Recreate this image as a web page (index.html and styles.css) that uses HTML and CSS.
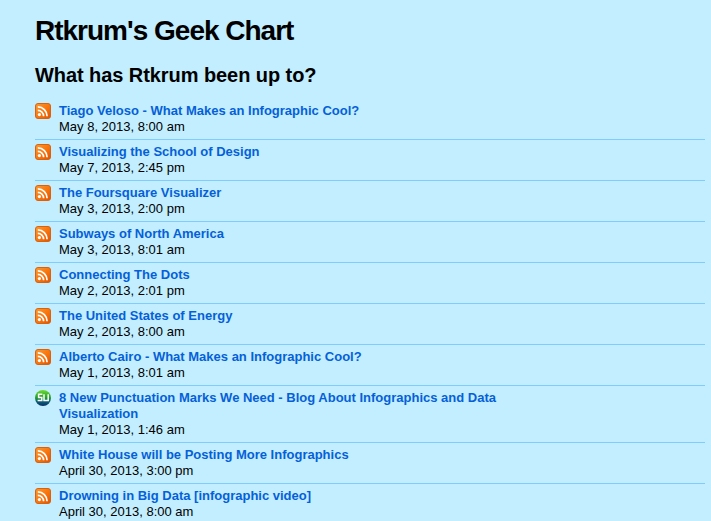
FILE: index.html
```html
<!DOCTYPE html>
<html lang="en">
<head>
<meta charset="utf-8">
<title>Rtkrum's Geek Chart</title>
<link rel="stylesheet" href="styles.css">
</head>
<body>
<svg class="defs" width="0" height="0" aria-hidden="true">
  <defs>
    <linearGradient id="rss-bg" x1="0" y1="0" x2="1" y2="1">
      <stop offset="0" stop-color="#fd9a2e"/>
      <stop offset="0.55" stop-color="#f8740c"/>
      <stop offset="1" stop-color="#e05200"/>
    </linearGradient>
    <linearGradient id="su-globe" x1="0" y1="0" x2="0" y2="1">
      <stop offset="0" stop-color="#6fdc30"/>
      <stop offset="0.5" stop-color="#1f9a2c"/>
      <stop offset="0.72" stop-color="#0c5f78"/>
      <stop offset="1" stop-color="#0a2f66"/>
    </linearGradient>
    <symbol id="rss" viewBox="0 0 16 16">
      <rect x="0.5" y="0.5" width="15" height="15" rx="2.5" fill="url(#rss-bg)" stroke="#d9620c"/>
      <circle cx="4.4" cy="11.6" r="1.6" fill="#fff"/>
      <path d="M2.8 7.4a5.8 5.8 0 0 1 5.8 5.8" fill="none" stroke="#fff" stroke-width="1.7"/>
      <path d="M2.8 3.9a9.3 9.3 0 0 1 9.3 9.3" fill="none" stroke="#fff" stroke-width="1.7"/>
    </symbol>
    <symbol id="su" viewBox="0 0 16 16">
      <circle cx="8" cy="8" r="8" fill="url(#su-globe)"/>
      <path d="M7.4 4.2H3.6v3.4h3.2v2.8H2.6" fill="none" stroke="#fff" stroke-width="1.5"/>
      <path d="M9 4.2v6.2h4.2V4.2" fill="none" stroke="#fff" stroke-width="1.5"/>
    </symbol>
  </defs>
</svg>
<main class="page">
  <h1 class="title">Rtkrum's Geek Chart</h1>
  <h2 class="subtitle">What has Rtkrum been up to?</h2>
  <ul class="feed">
    <li class="item"><svg class="icon"><use href="#rss"/></svg><div class="body"><a class="link" href="#">Tiago Veloso - What Makes an Infographic Cool?</a><div class="date">May 8, 2013, 8:00 am</div></div></li>
    <li class="item"><svg class="icon"><use href="#rss"/></svg><div class="body"><a class="link" href="#">Visualizing the School of Design</a><div class="date">May 7, 2013, 2:45 pm</div></div></li>
    <li class="item"><svg class="icon"><use href="#rss"/></svg><div class="body"><a class="link" href="#">The Foursquare Visualizer</a><div class="date">May 3, 2013, 2:00 pm</div></div></li>
    <li class="item"><svg class="icon"><use href="#rss"/></svg><div class="body"><a class="link" href="#">Subways of North America</a><div class="date">May 3, 2013, 8:01 am</div></div></li>
    <li class="item"><svg class="icon"><use href="#rss"/></svg><div class="body"><a class="link" href="#">Connecting The Dots</a><div class="date">May 2, 2013, 2:01 pm</div></div></li>
    <li class="item"><svg class="icon"><use href="#rss"/></svg><div class="body"><a class="link" href="#">The United States of Energy</a><div class="date">May 2, 2013, 8:00 am</div></div></li>
    <li class="item"><svg class="icon"><use href="#rss"/></svg><div class="body"><a class="link" href="#">Alberto Cairo - What Makes an Infographic Cool?</a><div class="date">May 1, 2013, 8:01 am</div></div></li>
    <li class="item"><svg class="icon"><use href="#su"/></svg><div class="body"><a class="link" href="#">8 New Punctuation Marks We Need - Blog About Infographics and Data Visualization</a><div class="date">May 1, 2013, 1:46 am</div></div></li>
    <li class="item"><svg class="icon"><use href="#rss"/></svg><div class="body"><a class="link" href="#">White House will be Posting More Infographics</a><div class="date">April 30, 2013, 3:00 pm</div></div></li>
    <li class="item"><svg class="icon"><use href="#rss"/></svg><div class="body"><a class="link" href="#">Drowning in Big Data [infographic video]</a><div class="date">April 30, 2013, 8:00 am</div></div></li>
  </ul>
</main>
</body>
</html>
```
FILE: styles.css
```css
html, body {
  margin: 0;
  padding: 0;
  height: 521px;
  overflow: hidden;
  background: #c2eeff;
}
body {
  font-family: "Liberation Sans", Arial, sans-serif;
  color: #000;
}
.defs {
  position: absolute;
}
.page {
  padding: 15px 6px 0 35px;
}
.title {
  margin: 0;
  font-size: 28px;
  line-height: 32px;
  font-weight: bold;
  letter-spacing: -1px;
}
.subtitle {
  margin: 16px 0 0;
  font-size: 20px;
  line-height: 24px;
  font-weight: bold;
  letter-spacing: -0.07px;
}
.feed {
  list-style: none;
  margin: 12px 0 0;
  padding: 0;
}
.item {
  display: flex;
  gap: 8px;
  padding: 4px 0;
  border-bottom: 1px solid #7fcdff;
}
.icon {
  width: 16px;
  height: 16px;
  flex: none;
}
.body {
  width: 440px;
  font-size: 13px;
  line-height: 16px;
}
.link {
  color: #0560d8;
  font-weight: bold;
  text-decoration: none;
}
```
